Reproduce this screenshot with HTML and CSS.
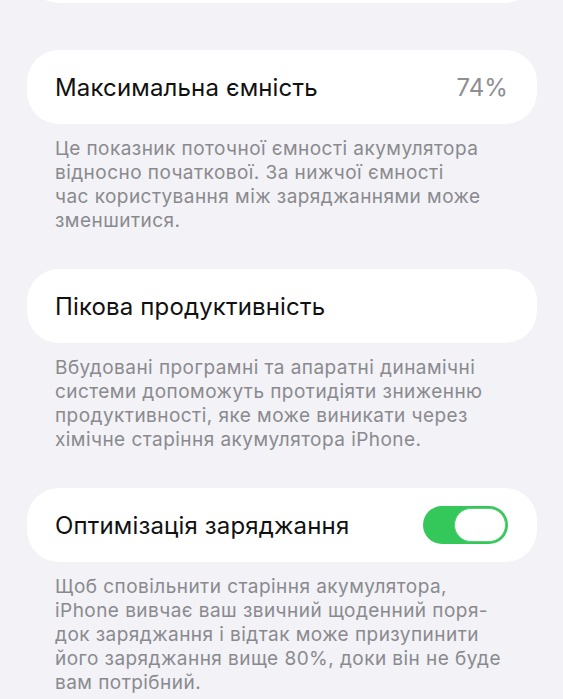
FILE: index.html
```html
<!DOCTYPE html>
<html lang="uk">
<head>
	<meta charset="UTF-8">
	<title>Стан акумулятора</title>
	<link rel="stylesheet" href="styles.css">
</head>
<body>
	<div class="page">
		<div class="cell cell-cut"></div>

		<div class="cell">
			<span class="cell-title">Максимальна ємність</span>
			<span class="cell-value">74%</span>
		</div>
		<p class="note">Це показник поточної ємності акумулятора<br>відносно початкової. За нижчої ємності<br>час користування між заряджаннями може<br>зменшитися.</p>

		<div class="cell">
			<span class="cell-title">Пікова продуктивність</span>
		</div>
		<p class="note">Вбудовані програмні та апаратні динамічні<br>системи допоможуть протидіяти зниженню<br>продуктивності, яке може виникати через<br>хімічне старіння акумулятора iPhone.</p>

		<div class="cell">
			<span class="cell-title">Оптимізація заряджання</span>
			<span class="switch"><span class="switch-knob"></span></span>
		</div>
		<p class="note">Щоб сповільнити старіння акумулятора,<br>iPhone вивчає ваш звичний щоденний поря-<br>док заряджання і відтак може призупинити<br>його заряджання вище 80%, доки він не буде<br>вам потрібний.</p>
	</div>
</body>
</html>
```

FILE: styles.css
```css
* {
	margin: 0;
	padding: 0;
	box-sizing: border-box;
}
html, body {
	background-color: #f2f2f7;
}
body {
	font-family: Inter, "Noto Sans", sans-serif;
	overflow: hidden;
}
.page {
	padding: 0 26px 0 27px;
}
.cell {
	height: 74px;
	background-color: #fff;
	border-radius: 32px;
	display: flex;
	align-items: center;
	justify-content: space-between;
	padding: 0 29px 0 28px;
}
.cell-cut {
	margin-top: -71px;
	margin-bottom: 47px;
}
.cell-title {
	font-size: 24px;
	color: #111;
	letter-spacing: 0.15px;
}
.cell-value {
	font-size: 24px;
	color: #8e8e93;
	letter-spacing: 0.05px;
}
.note {
	padding: 13px 28px 0 28px;
	margin-bottom: 36px;
	font-size: 19px;
	line-height: 24px;
	color: #8a8a8e;
	letter-spacing: 0.45px;
	white-space: nowrap;
}
.switch {
	width: 85px;
	height: 38px;
	border-radius: 19px;
	background-color: #34c759;
	display: flex;
	align-items: center;
	justify-content: flex-end;
	padding-right: 2px;
}
.switch-knob {
	width: 52px;
	height: 34px;
	border-radius: 17px;
	background-color: #fff;
	border: 1.5px solid #5dcf7a;
}
```
